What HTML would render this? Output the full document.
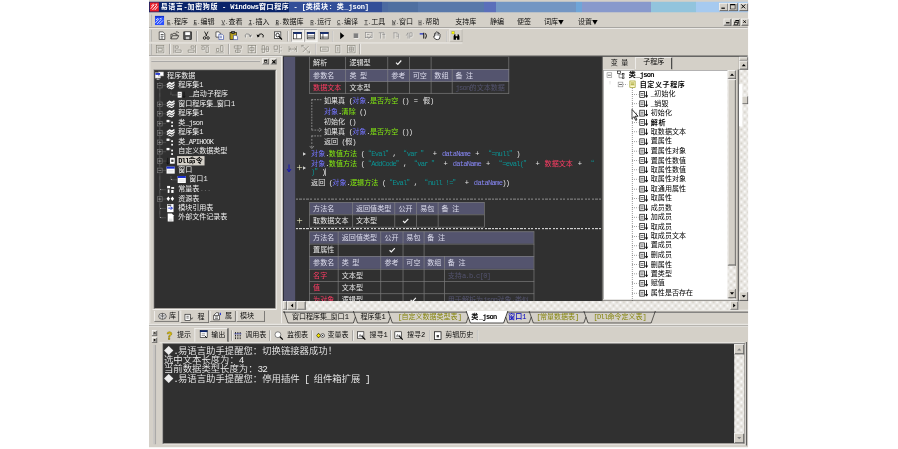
<!DOCTYPE html>
<html lang="zh-CN"><head><meta charset="utf-8"><title>易语言</title><style>
html,body{margin:0;padding:0;background:#fff}
body{width:898px;height:449px;overflow:hidden;position:relative}
#w{position:absolute;left:148.7px;top:0;width:1025px;height:768px;transform:scale(0.584635);transform-origin:0 0;overflow:hidden;background:#fff;font-family:"Liberation Mono","Noto Sans CJK SC",monospace;font-size:12px;line-height:13px;color:#000;font-weight:350;text-spacing-trim:space-all}
#w div,#w svg,#w i{position:absolute;display:block}
#w .t{white-space:pre}
#w span{position:static}
#w .op{display:inline-block;width:12px;text-align:center}
.l{letter-spacing:-1.2px}
.dn{font-size:10px;width:11px !important}
.ma{font-size:10px;color:#222}
.c{font-family:"Noto Sans CJK SC",sans-serif;display:inline-block;width:1em;text-spacing-trim:space-all;line-height:0}
.ttl .l{letter-spacing:-0.2px}
.big{font-size:16px;line-height:16px}
.big .l{letter-spacing:-1.6px}
.btn{background:#d4d0c8;border:1px solid;border-color:#fff #404040 #404040 #fff;box-shadow:inset -1px -1px 0 #808080}
u{text-decoration:underline}
</style></head><body><div id="w">
<div style="left:0px;top:0px;width:1025px;height:765.2px;background:#d4d0c8"></div>
<div style="left:0px;top:3px;width:1025px;height:17.7px;background:linear-gradient(90deg,#0a246a 0px,#0a246a 239px,#324e98 239px,#324e98 399px,#4c6aa0 399px,#4c6aa0 409px,#4f6fa0 409px,#4f6fa0 460px,#5878aa 460px,#5878aa 573px,#5b6fba 573px,#5b6fba 594px,#7396c3 594px,#7396c3 730px,#6fa5d8 730px,#6fa5d8 741px,#8899cc 741px,#8899cc 859px,#92c4dd 859px,#92c4dd 936px,#a6caf0 936px,#a6caf0 1025px)"></div>
<svg class="a" style="left:0.8px;top:4px" width="16" height="16" viewBox="0 0 16 16"><rect width="16" height="16" fill="#e8202a"/><path d="M2 11 L8 4 M5 13 L12 5 M9 13 L14 7 M3 6 L7 3 M10 4 L13 3" stroke="#fff" stroke-width="1.6" fill="none"/></svg>
<div class="t ttl" style="left:20px;top:4px;color:#fff;font-weight:bold;letter-spacing:1px;line-height:16px">易语言<span class="l">-</span>加密狗版<span class="l"> - Windows</span>窗口程序<span class="l"> - [</span>类模块<span class="l">: </span>类<span class="l">_json]</span></div>
<div class="btn" style="left:974.6px;top:5px;width:14px;height:12px">
<i style="left:3px;top:7px;width:6px;height:2px;background:#000"></i>
</div>
<div class="btn" style="left:990.6px;top:5px;width:14px;height:12px">
<i style="left:2px;top:1px;width:7px;height:6px;border:1px solid #000;border-top-width:2px"></i>
</div>
<div class="btn" style="left:1008.6px;top:5px;width:14px;height:12px">
<svg class="a" style="left:2px;top:1px" width="9" height="8" viewBox="0 0 9 8"><path d="M1 0.5 L8 7.5 M8 0.5 L1 7.5" stroke="#000" stroke-width="1.7"/></svg>
</div>
<div class="btn" style="left:982.7px;top:32px;width:11px;height:10px">
<i style="left:3px;top:5px;width:6px;height:2px;background:#000"></i>
</div>
<div class="btn" style="left:998px;top:32px;width:11px;height:10px">
<i style="left:4px;top:1px;width:4px;height:3px;border:1px solid #000;border-top-width:2px"></i><i style="left:2px;top:4px;width:4px;height:3px;border:1px solid #000;border-top-width:2px;background:#d4d0c8"></i>
</div>
<div class="btn" style="left:1013px;top:32px;width:10.5px;height:10px">
<svg class="a" style="left:2px;top:1px" width="5.5" height="6" viewBox="0 0 9 8"><path d="M1 0.5 L8 7.5 M8 0.5 L1 7.5" stroke="#000" stroke-width="2.6"/></svg>
</div>
<div style="left:0px;top:47px;width:1024px;height:1px;background:#808080"></div>
<div style="left:0px;top:48px;width:1024px;height:1px;background:#fff"></div>
<div style="left:2.3px;top:25px;width:1px;height:20px;background:#fff"></div>
<div style="left:3.3px;top:25px;width:1px;height:20px;background:#808080"></div>
<svg class="a" style="left:10px;top:27px" width="16" height="16" viewBox="0 0 16 16"><rect width="16" height="16" fill="#2a50ff"/><path d="M1 12 L7 5 M4 14 L11 6 M8 14 L14 8 M2 7 L6 4 M9 5 L13 3" stroke="#dfe6ff" stroke-width="1.5" fill="none"/><rect y="0" width="16" height="3" fill="#1030d0"/></svg>
<div class="t" style="left:30.8px;top:32.3px"><span class="ma"><u>E</u>.</span>程序</div>
<div class="t" style="left:76.1px;top:32.3px"><span class="ma"><u>E</u>.</span>编辑</div>
<div class="t" style="left:124px;top:32.3px"><span class="ma"><u>V</u>.</span>查看</div>
<div class="t" style="left:170.2px;top:32.3px"><span class="ma"><u>I</u>.</span>插入</div>
<div class="t" style="left:216.4px;top:32.3px"><span class="ma"><u>B</u>.</span>数据库</div>
<div class="t" style="left:275.7px;top:32.3px"><span class="ma"><u>R</u>.</span>运行</div>
<div class="t" style="left:321.6px;top:32.3px"><span class="ma"><u>C</u>.</span>编译</div>
<div class="t" style="left:368.3px;top:32.3px"><span class="ma"><u>T</u>.</span>工具</div>
<div class="t" style="left:415.5px;top:32.3px"><span class="ma"><u>W</u>.</span>窗口</div>
<div class="t" style="left:460.7px;top:32.3px"><span class="ma"><u>H</u>.</span>帮助</div>
<div class="t" style="left:523.9px;top:32.3px;">支持库</div>
<div class="t" style="left:583.3px;top:32.3px;">静编</div>
<div class="t" style="left:629.4px;top:32.3px;">便签</div>
<div class="t" style="left:675.6px;top:32.3px;">词库<span class="c dn">▼</span></div>
<div class="t" style="left:733.9px;top:32.3px;">设置<span class="c dn">▼</span></div>
<div style="left:2.3px;top:51px;width:1px;height:20px;background:#fff"></div>
<div style="left:3.3px;top:51px;width:1px;height:20px;background:#808080"></div>
<div style="left:0px;top:72.5px;width:536px;height:1px;background:#fff"></div>
<svg class="a" style="left:13.7px;top:53.2px" width="16" height="16" viewBox="0 0 16 16"><path d="M3.5 1.5 H10 L13 4.5 V14.5 H3.5 Z" fill="#fff" stroke="#000"/><path d="M6 6 H11 M6 9 H11 M6 12 H10" stroke="#444" stroke-width="1.5"/></svg>
<svg class="a" style="left:36px;top:53.2px" width="16" height="16" viewBox="0 0 16 16"><path d="M1.5 13.5 V5.5 H5 L6 4 H9 V5.5 H12 V8" fill="none" stroke="#000"/><path d="M1.5 13.5 L4 8 H15 L12 13.5 Z" fill="#d4d0c8" stroke="#000"/><path d="M10 2 Q13 0 14 3 L15 2" stroke="#000" fill="none"/></svg>
<svg class="a" style="left:57.9px;top:53.2px" width="16" height="16" viewBox="0 0 16 16"><rect x="1.5" y="1.5" width="13" height="13" fill="#555" stroke="#000"/><rect x="4" y="2" width="8" height="5" fill="#fff"/><rect x="5" y="10" width="6" height="4" fill="#ccc"/></svg>
<div style="left:81.2px;top:53px;width:1px;height:18px;background:#808080"></div>
<div style="left:82.2px;top:53px;width:1px;height:18px;background:#fff"></div>
<svg class="a" style="left:89.8px;top:53.2px" width="16" height="16" viewBox="0 0 16 16"><path d="M5 1 L9 9 M11 1 L7 9" stroke="#000" stroke-width="1.3"/><circle cx="5" cy="12" r="2.2" fill="none" stroke="#000" stroke-width="1.3"/><circle cx="11" cy="12" r="2.2" fill="none" stroke="#000" stroke-width="1.3"/></svg>
<svg class="a" style="left:112.8px;top:53.2px" width="16" height="16" viewBox="0 0 16 16"><path d="M1.5 1.5 H7 L9 3.5 V10.5 H1.5 Z" fill="#fff" stroke="#000"/><path d="M6.5 5.5 H12 L14.5 8 V14.5 H6.5 Z" fill="#fff" stroke="#223a9a"/><path d="M8 9 H12 M8 11.5 H12" stroke="#223a9a"/></svg>
<svg class="a" style="left:136.9px;top:53.2px" width="16" height="16" viewBox="0 0 16 16"><rect x="1.5" y="2.5" width="11" height="12" fill="#b8a020" stroke="#000"/><rect x="4.5" y="1" width="5" height="3" fill="#666" stroke="#000"/><path d="M7.5 7.5 H12 L14.5 10 V15 H7.5 Z" fill="#fff" stroke="#223a9a"/></svg>
<svg class="a" style="left:160.5px;top:53.2px;filter:drop-shadow(1px 1px 0 #fff)" width="16" height="16" viewBox="0 0 16 16"><path d="M13 9 Q11 4 6 5 Q2 6 4 11" fill="none" stroke="#808080" stroke-width="1.5"/><path d="M15 6 L13 11 L9 8 Z" fill="#808080"/></svg>
<svg class="a" style="left:182.7px;top:53.2px" width="16" height="16" viewBox="0 0 16 16"><path d="M3 9 Q5 4 10 5 Q14 6 12 11" fill="none" stroke="#000" stroke-width="1.5"/><path d="M1 6 L3 11 L7 8 Z" fill="#000"/></svg>
<svg class="a" style="left:213.3px;top:53.2px" width="16" height="16" viewBox="0 0 16 16"><rect x="1.5" y="1.5" width="11" height="11" fill="#fff" stroke="#000"/><circle cx="7" cy="7" r="3" fill="none" stroke="#000" stroke-width="1.3"/><path d="M9 9 L14.5 14.5" stroke="#000" stroke-width="2"/></svg>
<div style="left:237.1px;top:53px;width:1px;height:18px;background:#808080"></div>
<div style="left:238.1px;top:53px;width:1px;height:18px;background:#fff"></div>
<div style="left:243px;top:50.2px;width:22px;height:22px;background:#ebe9e4;border:1px solid;border-color:#808080 #fff #fff #808080;box-sizing:border-box"></div>
<svg class="a" style="left:246px;top:53.2px" width="16" height="16" viewBox="0 0 16 16"><rect x="1.5" y="2.5" width="13" height="11" fill="#fff" stroke="#000"/><rect x="1" y="2" width="14" height="3" fill="#0a246a"/><path d="M6.5 5 V13" stroke="#000"/></svg>
<div style="left:265.9px;top:50.2px;width:22px;height:22px;background:#ebe9e4;border:1px solid;border-color:#808080 #fff #fff #808080;box-sizing:border-box"></div>
<svg class="a" style="left:268.9px;top:53.2px" width="16" height="16" viewBox="0 0 16 16"><rect x="1.5" y="2.5" width="13" height="11" fill="#fff" stroke="#000"/><rect x="1" y="2" width="14" height="3" fill="#0a246a"/><path d="M2 8.5 H14 M2 11 H14" stroke="#000"/></svg>
<svg class="a" style="left:292.4px;top:53.2px" width="16" height="16" viewBox="0 0 16 16"><rect x="1.5" y="2.5" width="13" height="11" fill="#fff" stroke="#000"/><rect x="1" y="2" width="14" height="3" fill="#0a246a"/><path d="M5.5 5 V13 M2 10.5 H14" stroke="#000"/></svg>
<div style="left:313px;top:53px;width:1px;height:18px;background:#808080"></div>
<div style="left:314px;top:53px;width:1px;height:18px;background:#fff"></div>
<svg class="a" style="left:322.3px;top:53.2px" width="16" height="16" viewBox="0 0 16 16"><path d="M5 2 L12 8 L5 14 Z" fill="#000"/></svg>
<svg class="a" style="left:345.7px;top:53.2px;filter:drop-shadow(1px 1px 0 #fff)" width="16" height="16" viewBox="0 0 16 16"><rect x="4" y="4" width="8" height="8" fill="#808080"/></svg>
<svg class="a" style="left:368px;top:53.2px;filter:drop-shadow(1px 1px 0 #fff)" width="16" height="16" viewBox="0 0 16 16"><rect x="2.5" y="2.5" width="11" height="9" fill="none" stroke="#808080"/><path d="M5 6 H9 M5 9 L8 13 L12 8" stroke="#808080" fill="none"/></svg>
<svg class="a" style="left:391.1px;top:53.2px;filter:drop-shadow(1px 1px 0 #fff)" width="16" height="16" viewBox="0 0 16 16"><path d="M2 3 H11 V13 M5 3 V13 M8 6 H13" stroke="#808080" fill="none"/></svg>
<svg class="a" style="left:415px;top:53.2px;filter:drop-shadow(1px 1px 0 #fff)" width="16" height="16" viewBox="0 0 16 16"><path d="M3 3 H10 M4 3 V13 M8 5 H12 V13 M8 9 H12" stroke="#808080" fill="none"/></svg>
<svg class="a" style="left:438.4px;top:53.2px;filter:drop-shadow(1px 1px 0 #fff)" width="16" height="16" viewBox="0 0 16 16"><path d="M2 8 L5 3 V13 M8 3 H12 V9 H8 M8 3 V13" stroke="#808080" fill="none"/></svg>
<svg class="a" style="left:461.9px;top:53.2px" width="16" height="16" viewBox="0 0 16 16"><path d="M1 4 H8 L8 6 H1Z" fill="#2030c0"/><path d="M8 3 V13 M11 4 Q14 8 11 13" stroke="#000" stroke-width="1.6" fill="none"/></svg>
<svg class="a" style="left:484.8px;top:53.2px" width="16" height="16" viewBox="0 0 16 16"><path d="M3.5 9 V4.5 Q4.5 2.5 5.5 4.5 V2.5 Q6.8 0.8 8 2.5 V2.2 Q9.7 1 10.3 3.2 V4.2 Q12 3.5 12.7 5.5 V10 Q12.7 15 8 15 Q4.5 15 2 10.5 Q1.5 8 3.5 9 Z" fill="#fff" stroke="#000" stroke-width="1.2"/><path d="M5.5 5 V8 M8 3 V8 M10.3 4 V8" stroke="#000" stroke-width=".8"/></svg>
<div style="left:508.4px;top:53px;width:1px;height:18px;background:#808080"></div>
<div style="left:509.4px;top:53px;width:1px;height:18px;background:#fff"></div>
<div style="left:513.8px;top:50.2px;width:22px;height:22px;border:1px solid;border-color:#f4f2ee #b0aca4 #b0aca4 #f4f2ee;box-sizing:border-box"></div>
<svg class="a" style="left:516.8px;top:53.2px" width="16" height="16" viewBox="0 0 16 16"><rect x="1" y="1" width="4" height="4" fill="#ffff00" stroke="#808000" stroke-width=".6"/><path d="M4 9 V15 H8 V11.5 H10 V15 H14 V9 L12.5 5.5 H10.8 V9 H7.2 V5.5 H5.5 Z" fill="#000"/></svg>
<div style="left:2.3px;top:75px;width:1px;height:19px;background:#fff"></div>
<div style="left:3.3px;top:75px;width:1px;height:19px;background:#808080"></div>
<svg class="a" style="left:10.8px;top:76px;filter:drop-shadow(1px 1px 0 #fff)" width="16" height="16" viewBox="0 0 16 16" fill="none" stroke="#858378" stroke-width="1.2"><rect x="1.5" y="1.5" width="13" height="13"/><rect x="4.5" y="6.5" width="7" height="5"/><path d="M2 4.5 H14"/></svg>
<div style="left:34.7px;top:75px;width:1px;height:18px;background:#808080"></div>
<div style="left:35.7px;top:75px;width:1px;height:18px;background:#fff"></div>
<svg class="a" style="left:41.1px;top:76px;filter:drop-shadow(1px 1px 0 #fff)" width="16" height="16" viewBox="0 0 16 16" fill="none" stroke="#858378" stroke-width="1.2"><path d="M1.5 1 V15 M4 2.5 H9 V6.5 H4Z M4 9.5 H14 V13.5 H4Z"/></svg>
<svg class="a" style="left:65px;top:76px;filter:drop-shadow(1px 1px 0 #fff)" width="16" height="16" viewBox="0 0 16 16" fill="none" stroke="#858378" stroke-width="1.2"><path d="M14.5 1 V15 M7 2.5 H12 V6.5 H7Z M2 9.5 H12 V13.5 H2Z"/></svg>
<svg class="a" style="left:88px;top:76px;filter:drop-shadow(1px 1px 0 #fff)" width="16" height="16" viewBox="0 0 16 16" fill="none" stroke="#858378" stroke-width="1.2"><path d="M1 1.5 H15 M2.5 4 H6.5 V9 H2.5Z M9.5 4 H13.5 V14 H9.5Z"/></svg>
<svg class="a" style="left:112.8px;top:76px;filter:drop-shadow(1px 1px 0 #fff)" width="16" height="16" viewBox="0 0 16 16" fill="none" stroke="#858378" stroke-width="1.2"><path d="M1 14.5 H15 M2.5 7 H6.5 V12 H2.5Z M9.5 2 H13.5 V12 H9.5Z"/></svg>
<div style="left:135.6px;top:75px;width:1px;height:18px;background:#808080"></div>
<div style="left:136.6px;top:75px;width:1px;height:18px;background:#fff"></div>
<svg class="a" style="left:144.1px;top:76px;filter:drop-shadow(1px 1px 0 #fff)" width="16" height="16" viewBox="0 0 16 16" fill="none" stroke="#858378" stroke-width="1.2"><path d="M8 1 V15 M2 2.5 H14 V6.5 H2Z M4 9.5 H12 V13.5 H4Z"/></svg>
<svg class="a" style="left:167.8px;top:76px;filter:drop-shadow(1px 1px 0 #fff)" width="16" height="16" viewBox="0 0 16 16" fill="none" stroke="#858378" stroke-width="1.2"><rect x="1.5" y="1.5" width="13" height="13"/><path d="M8 1 V15 M4.5 5.5 H11.5 V10.5 H4.5Z"/></svg>
<svg class="a" style="left:191.4px;top:76px;filter:drop-shadow(1px 1px 0 #fff)" width="16" height="16" viewBox="0 0 16 16" fill="none" stroke="#858378" stroke-width="1.2"><path d="M1 8 H15 M2.5 2 H6.5 V14 H2.5Z M9.5 4 H13.5 V12 H9.5Z"/></svg>
<svg class="a" style="left:212.3px;top:76px;filter:drop-shadow(1px 1px 0 #fff)" width="16" height="16" viewBox="0 0 16 16" fill="none" stroke="#858378" stroke-width="1.2"><path d="M2 2.5 H8 V8.5 H2Z M11 1 V15 M13 5 H15 M13 11 H15 M2 11.5 H8"/></svg>
<svg class="a" style="left:238px;top:76px;filter:drop-shadow(1px 1px 0 #fff)" width="16" height="16" viewBox="0 0 16 16" fill="none" stroke="#858378" stroke-width="1.2"><path d="M1.5 3 V13 M14.5 3 V13 M2 8 H14 M5 5.5 L2.5 8 L5 10.5 M11 5.5 L13.5 8 L11 10.5"/></svg>
<svg class="a" style="left:260.4px;top:76px;filter:drop-shadow(1px 1px 0 #fff)" width="16" height="16" viewBox="0 0 16 16" fill="none" stroke="#858378" stroke-width="1.2"><path d="M3 3 L13 13 M13 3 L3 13 M1 1.5 H5 M11 14.5 H15 M1.5 1 V5 M14.5 11 V15"/></svg>
<div style="left:283.8px;top:75px;width:1px;height:18px;background:#808080"></div>
<div style="left:284.8px;top:75px;width:1px;height:18px;background:#fff"></div>
<svg class="a" style="left:292.4px;top:76px;filter:drop-shadow(1px 1px 0 #fff)" width="16" height="16" viewBox="0 0 16 16" fill="none" stroke="#858378" stroke-width="1.2"><rect x="1.5" y="4.5" width="13" height="7"/><path d="M4 8 H12"/></svg>
<svg class="a" style="left:315.1px;top:76px;filter:drop-shadow(1px 1px 0 #fff)" width="16" height="16" viewBox="0 0 16 16" fill="none" stroke="#858378" stroke-width="1.2"><rect x="4.5" y="1.5" width="7" height="13"/><path d="M8 4 V12"/></svg>
<svg class="a" style="left:337.5px;top:76px;filter:drop-shadow(1px 1px 0 #fff)" width="16" height="16" viewBox="0 0 16 16" fill="none" stroke="#858378" stroke-width="1.2"><rect x="1.5" y="1.5" width="13" height="13"/><path d="M4 8 H12 M8 4 V12 M4.5 4.5 H11.5 V11.5 H4.5Z"/></svg>
<div style="left:359.7px;top:75px;width:1px;height:18px;background:#808080"></div>
<div style="left:360.7px;top:75px;width:1px;height:18px;background:#fff"></div>
<div style="left:4px;top:104.2px;width:186px;height:1px;background:#fff"></div>
<div style="left:4px;top:105.2px;width:186px;height:1px;background:#808080"></div>
<div class="btn" style="left:194px;top:99.5px;width:8.5px;height:8.5px"><i style="left:1.7px;top:1.5px;width:5px;height:5px;background:#000"></i><i style="left:2.7px;top:3.3px;width:3px;height:2.2px;background:#d4d0c8"></i></div>
<div class="btn" style="left:207.5px;top:99.5px;width:8.5px;height:8.5px"><svg class="a" style="left:1px;top:1px" width="7" height="7" viewBox="0 0 7 7"><path d="M0.8 0.8 L6.2 6.2 M6.2 0.8 L0.8 6.2" stroke="#000" stroke-width="1.8"/></svg></div>
<div style="left:0px;top:94.6px;width:229px;height:1px;background:#808080"></div>
<div style="left:0px;top:95.6px;width:229px;height:1px;background:#fff"></div>
<div style="left:0.8px;top:97px;width:1.2px;height:456px;background:#fff"></div>
<div style="left:225.5px;top:97px;width:1.3px;height:456px;background:#fff"></div>
<div style="left:8.3px;top:118.5px;width:210.2px;height:410.8px;border:1px solid;border-color:#808080 #fff #fff #808080;box-sizing:border-box;background:#d4d0c8"></div>
<div style="left:9.3px;top:119.5px;width:208.2px;height:408.8px;border:1px solid;border-color:#404040 #d4d0c8 #d4d0c8 #404040;box-sizing:border-box;background:#303030"></div>
<div style="left:17.5px;top:137.7px;width:0px;height:234.24px;border-left:1px dotted #a8a8a8"></div>
<svg class="a" style="left:10px;top:121.7px" width="16" height="16" viewBox="0 0 16 16"><rect x="0.5" y="2.5" width="9" height="9" fill="#fff" stroke="#bbb"/><rect x="6" y="1" width="9" height="7" fill="#fff" stroke="#999"/><rect x="1" y="3" width="8" height="3" fill="#1a2fd0"/><path d="M3 14 H8 M5 12 V14" stroke="#ddd"/></svg>
<div class="t" style="left:31px;top:123.7px;color:#f0f0f0;font-weight:400">程序数据</div>
<div style="left:18px;top:145.86px;width:10px;height:0px;border-top:1px dotted #a8a8a8"></div>
<div class="a" style="left:13.5px;top:141.86px;width:9px;height:9px;box-sizing:border-box;border:1px solid #808080;background:#303030"><i style="left:1px;top:3px;width:5px;height:1px;background:#b0b0b0"></i></div>
<svg class="a" style="left:29px;top:137.86px" width="16" height="16" viewBox="0 0 16 16"><path d="M1 6 L6 2 L10 4 L14 1.5 L15 4 L10 7.5 L6 5.5 L2 8.5 Z M1 10 L6 6.5 L10 8.5 L15 5.5 L15 8 L10 11.5 L6 9.5 L2 12.5 Z M3 14 L6 11 L10 13 L14 10 L14 12 L10 15 L6 13.5 Z" fill="#f4f4f4"/></svg>
<div class="t" style="left:50px;top:139.86px;color:#f0f0f0;font-weight:400">程序集<span class="l">1</span></div>
<div style="left:37px;top:162.02px;width:10px;height:0px;border-top:1px dotted #a8a8a8"></div>
<div style="left:37px;top:154.02px;width:0px;height:8px;border-left:1px dotted #a8a8a8"></div>
<svg class="a" style="left:48px;top:154.02px" width="16" height="16" viewBox="0 0 16 16"><rect x="1" y="3" width="7" height="10" fill="#fff"/><path d="M2.5 6 H6.5 M2.5 9 H6.5" stroke="#555"/><path d="M12 3 V12 M10 10 L12 13 L14 10" stroke="#111" stroke-width="1.5" fill="none"/></svg>
<div class="t" style="left:69px;top:156.02px;color:#f0f0f0;font-weight:400"><span class="l">_</span>启动子程序</div>
<div style="left:18px;top:178.18px;width:10px;height:0px;border-top:1px dotted #a8a8a8"></div>
<div class="a" style="left:13.5px;top:174.18px;width:9px;height:9px;box-sizing:border-box;border:1px solid #808080;background:#303030"><i style="left:1px;top:3px;width:5px;height:1px;background:#b0b0b0"></i><i style="left:3px;top:1px;width:1px;height:5px;background:#b0b0b0"></i></div>
<svg class="a" style="left:29px;top:170.18px" width="16" height="16" viewBox="0 0 16 16"><path d="M1 6 L6 2 L10 4 L14 1.5 L15 4 L10 7.5 L6 5.5 L2 8.5 Z M1 10 L6 6.5 L10 8.5 L15 5.5 L15 8 L10 11.5 L6 9.5 L2 12.5 Z M3 14 L6 11 L10 13 L14 10 L14 12 L10 15 L6 13.5 Z" fill="#f4f4f4"/></svg>
<div class="t" style="left:50px;top:172.18px;color:#f0f0f0;font-weight:400">窗口程序集<span class="l">_</span>窗口<span class="l">1</span></div>
<div style="left:18px;top:194.34px;width:10px;height:0px;border-top:1px dotted #a8a8a8"></div>
<div class="a" style="left:13.5px;top:190.34px;width:9px;height:9px;box-sizing:border-box;border:1px solid #808080;background:#303030"><i style="left:1px;top:3px;width:5px;height:1px;background:#b0b0b0"></i><i style="left:3px;top:1px;width:1px;height:5px;background:#b0b0b0"></i></div>
<svg class="a" style="left:29px;top:186.34px" width="16" height="16" viewBox="0 0 16 16"><path d="M1 6 L6 2 L10 4 L14 1.5 L15 4 L10 7.5 L6 5.5 L2 8.5 Z M1 10 L6 6.5 L10 8.5 L15 5.5 L15 8 L10 11.5 L6 9.5 L2 12.5 Z M3 14 L6 11 L10 13 L14 10 L14 12 L10 15 L6 13.5 Z" fill="#f4f4f4"/></svg>
<div class="t" style="left:50px;top:188.34px;color:#f0f0f0;font-weight:400">程序集<span class="l">1</span></div>
<div style="left:18px;top:210.5px;width:10px;height:0px;border-top:1px dotted #a8a8a8"></div>
<div class="a" style="left:13.5px;top:206.5px;width:9px;height:9px;box-sizing:border-box;border:1px solid #808080;background:#303030"><i style="left:1px;top:3px;width:5px;height:1px;background:#b0b0b0"></i><i style="left:3px;top:1px;width:1px;height:5px;background:#b0b0b0"></i></div>
<svg class="a" style="left:29px;top:202.5px" width="16" height="16" viewBox="0 0 16 16"><rect x="1" y="2" width="5" height="4" fill="#fff"/><rect x="9" y="5" width="3" height="3" fill="#fff"/><rect x="9" y="11" width="3" height="3" fill="#fff"/><path d="M6 4 H8" stroke="#ccc"/></svg>
<div class="t" style="left:50px;top:204.5px;color:#f0f0f0;font-weight:400">类<span class="l">_json</span></div>
<div style="left:18px;top:226.66px;width:10px;height:0px;border-top:1px dotted #a8a8a8"></div>
<div class="a" style="left:13.5px;top:222.66px;width:9px;height:9px;box-sizing:border-box;border:1px solid #808080;background:#303030"><i style="left:1px;top:3px;width:5px;height:1px;background:#b0b0b0"></i><i style="left:3px;top:1px;width:1px;height:5px;background:#b0b0b0"></i></div>
<svg class="a" style="left:29px;top:218.66px" width="16" height="16" viewBox="0 0 16 16"><path d="M1 6 L6 2 L10 4 L14 1.5 L15 4 L10 7.5 L6 5.5 L2 8.5 Z M1 10 L6 6.5 L10 8.5 L15 5.5 L15 8 L10 11.5 L6 9.5 L2 12.5 Z M3 14 L6 11 L10 13 L14 10 L14 12 L10 15 L6 13.5 Z" fill="#f4f4f4"/></svg>
<div class="t" style="left:50px;top:220.66px;color:#f0f0f0;font-weight:400">程序集<span class="l">1</span></div>
<div style="left:18px;top:242.82px;width:10px;height:0px;border-top:1px dotted #a8a8a8"></div>
<div class="a" style="left:13.5px;top:238.82px;width:9px;height:9px;box-sizing:border-box;border:1px solid #808080;background:#303030"><i style="left:1px;top:3px;width:5px;height:1px;background:#b0b0b0"></i><i style="left:3px;top:1px;width:1px;height:5px;background:#b0b0b0"></i></div>
<svg class="a" style="left:29px;top:234.82px" width="16" height="16" viewBox="0 0 16 16"><rect x="1" y="2" width="5" height="4" fill="#fff"/><rect x="9" y="5" width="3" height="3" fill="#fff"/><rect x="9" y="11" width="3" height="3" fill="#fff"/><path d="M6 4 H8" stroke="#ccc"/></svg>
<div class="t" style="left:50px;top:236.82px;color:#f0f0f0;font-weight:400">类<span class="l">_APIHOOK</span></div>
<div style="left:18px;top:258.98px;width:10px;height:0px;border-top:1px dotted #a8a8a8"></div>
<div class="a" style="left:13.5px;top:254.98px;width:9px;height:9px;box-sizing:border-box;border:1px solid #808080;background:#303030"><i style="left:1px;top:3px;width:5px;height:1px;background:#b0b0b0"></i><i style="left:3px;top:1px;width:1px;height:5px;background:#b0b0b0"></i></div>
<svg class="a" style="left:29px;top:250.98px" width="16" height="16" viewBox="0 0 16 16"><rect x="1" y="2" width="5" height="4" fill="#fff"/><rect x="9" y="5" width="3" height="3" fill="#fff"/><rect x="9" y="11" width="3" height="3" fill="#fff"/><path d="M6 4 H8" stroke="#ccc"/></svg>
<div class="t" style="left:50px;top:252.98px;color:#f0f0f0;font-weight:400">自定义数据类型</div>
<div style="left:18px;top:275.14px;width:10px;height:0px;border-top:1px dotted #a8a8a8"></div>
<div class="a" style="left:13.5px;top:271.14px;width:9px;height:9px;box-sizing:border-box;border:1px solid #808080;background:#303030"><i style="left:1px;top:3px;width:5px;height:1px;background:#b0b0b0"></i><i style="left:3px;top:1px;width:1px;height:5px;background:#b0b0b0"></i></div>
<svg class="a" style="left:29px;top:267.14px" width="16" height="16" viewBox="0 0 16 16"><path d="M3 3 V13 M1 11 L3 14 L5 11" stroke="#111" stroke-width="1.4" fill="none"/><rect x="7" y="3" width="8" height="10" fill="#fff"/><rect x="9" y="6" width="4" height="4" fill="#444"/></svg>
<div style="left:47.5px;top:267.44px;width:47px;height:15.4px;background:#d4d0c8;"></div>
<div class="t" style="left:50px;top:269.14px;color:#000;font-weight:700"><span class="l">Dll</span>命令</div>
<div style="left:18px;top:291.3px;width:10px;height:0px;border-top:1px dotted #a8a8a8"></div>
<div class="a" style="left:13.5px;top:287.3px;width:9px;height:9px;box-sizing:border-box;border:1px solid #808080;background:#303030"><i style="left:1px;top:3px;width:5px;height:1px;background:#b0b0b0"></i></div>
<svg class="a" style="left:29px;top:283.3px" width="16" height="16" viewBox="0 0 16 16"><rect x="1" y="2" width="14" height="12" fill="#fff"/><rect x="1" y="2" width="14" height="3.5" fill="#1a2fd0"/><path d="M3 8.5 H13 M3 11 H13" stroke="#ccc"/></svg>
<div class="t" style="left:50px;top:285.3px;color:#f0f0f0;font-weight:400">窗口</div>
<div style="left:37px;top:307.46px;width:10px;height:0px;border-top:1px dotted #a8a8a8"></div>
<div style="left:37px;top:299.46px;width:0px;height:8px;border-left:1px dotted #a8a8a8"></div>
<svg class="a" style="left:48px;top:299.46px" width="16" height="16" viewBox="0 0 16 16"><rect x="1" y="2" width="14" height="12" fill="#fff"/><rect x="1" y="2" width="14" height="3.5" fill="#1a2fd0"/><path d="M3 8.5 H13 M3 11 H13" stroke="#ccc"/></svg>
<div class="t" style="left:69px;top:301.46px;color:#f0f0f0;font-weight:400">窗口<span class="l">1</span></div>
<div style="left:18px;top:323.62px;width:10px;height:0px;border-top:1px dotted #a8a8a8"></div>
<svg class="a" style="left:29px;top:315.62px" width="16" height="16" viewBox="0 0 16 16"><rect x="2" y="2" width="5" height="4" fill="#fff"/><rect x="9" y="4" width="5" height="3" fill="#fff"/><rect x="3" y="8" width="3" height="6" fill="#fff"/><rect x="9" y="9" width="4" height="5" fill="#fff"/></svg>
<div class="t" style="left:50px;top:317.62px;color:#f0f0f0;font-weight:400">常量表</div>
<div class="t" style="left:87px;top:317.62px;color:#707070"><span class="l">...</span></div>
<div style="left:18px;top:339.78px;width:10px;height:0px;border-top:1px dotted #a8a8a8"></div>
<div class="a" style="left:13.5px;top:335.78px;width:9px;height:9px;box-sizing:border-box;border:1px solid #808080;background:#303030"><i style="left:1px;top:3px;width:5px;height:1px;background:#b0b0b0"></i><i style="left:3px;top:1px;width:1px;height:5px;background:#b0b0b0"></i></div>
<svg class="a" style="left:29px;top:331.78px" width="16" height="16" viewBox="0 0 16 16"><path d="M1 8 L4 4 L7 8 L4 12 Z M8 8 L11 4 L14 8 L11 12 Z" fill="#fff"/></svg>
<div class="t" style="left:50px;top:333.78px;color:#f0f0f0;font-weight:400">资源表</div>
<div style="left:18px;top:355.94px;width:10px;height:0px;border-top:1px dotted #a8a8a8"></div>
<svg class="a" style="left:29px;top:347.94px" width="16" height="16" viewBox="0 0 16 16"><rect x="2" y="1" width="11" height="14" fill="#fff"/><path d="M4 8 H11 M8 5 L11 8 L8 11" stroke="#1a2fd0" stroke-width="1.6" fill="none"/><rect x="3" y="2" width="6" height="2" fill="#333"/></svg>
<div class="t" style="left:50px;top:349.94px;color:#f0f0f0;font-weight:400">模块引用表</div>
<div style="left:18px;top:372.1px;width:10px;height:0px;border-top:1px dotted #a8a8a8"></div>
<svg class="a" style="left:29px;top:364.1px" width="16" height="16" viewBox="0 0 16 16"><path d="M3 1 H10 L13 4 V15 H3 Z" fill="#fff"/><path d="M5 11 H11 M5 13 H11" stroke="#bbb"/></svg>
<div class="t" style="left:50px;top:366.1px;color:#f0f0f0;font-weight:400">外部文件记录表</div>
<div style="left:6px;top:529px;width:212px;height:1px;background:#fff"></div>
<div style="left:9.4px;top:531.8px;width:41.9px;height:18.3px;border:1px solid;border-color:#d4d0c8 #404040 #404040 #fff;border-top:none;box-sizing:border-box"></div>

<div style="left:53.9px;top:530.8px;width:47.9px;height:21.3px;background:#d4d0c8;border:1px solid;border-color:#d4d0c8 #404040 #404040 #fff;border-top:none;box-sizing:border-box"></div>

<div style="left:103.5px;top:531.8px;width:44.5px;height:18.3px;border:1px solid;border-color:#d4d0c8 #404040 #404040 #fff;border-top:none;box-sizing:border-box"></div>

<div style="left:149.7px;top:531.8px;width:47.9px;height:18.3px;border:1px solid;border-color:#d4d0c8 #404040 #404040 #fff;border-top:none;box-sizing:border-box"></div>

<svg class="a" style="left:14.5px;top:533.3px" width="16" height="16" viewBox="0 0 16 16"><ellipse cx="8" cy="8" rx="6.5" ry="5" fill="#fff" stroke="#000"/><path d="M3 8 Q8 3 13 8 M4 10 Q8 6 12 10 M8 3 V13" stroke="#000" fill="none" stroke-width=".8"/></svg>
<div class="t" style="left:34.2px;top:535.3px;">库</div>
<svg class="a" style="left:59.9px;top:535.3px" width="16" height="16" viewBox="0 0 16 16"><rect x="1.5" y="2.5" width="9" height="11" fill="#fff" stroke="#000"/><path d="M4 6 H8 M4 9 H8" stroke="#000"/><path d="M11 8 L13 11 L15 8" stroke="#000" fill="none"/></svg>
<div class="t" style="left:83px;top:537.3px;">程</div>
<svg class="a" style="left:108.6px;top:533.3px" width="16" height="16" viewBox="0 0 16 16"><path d="M2 6 L6 2 H10 V6 M1.5 6.5 H11.5 V14 H1.5 Z" fill="#fff" stroke="#000"/><path d="M4 9 H9 M4 11.5 H9" stroke="#000"/><rect x="12" y="2" width="2" height="4" fill="#1a2fd0"/></svg>
<div class="t" style="left:130px;top:535.3px;">属</div>
<div class="t" style="left:155.7px;top:535.3px;">模块</div>
<div class="a" style="left:229px;top:96px;width:780px;height:419px;background:#303030;overflow:hidden;font-weight:400;font-size:12.1px">
<div class="a" style="left:0px;top:0px;width:20.5px;height:419px;background:#54546e"></div>
<div class="a" style="left:0px;top:0px;width:1.2px;height:419px;background:#000"></div>
<div class="a" style="left:0px;top:0px;width:780px;height:1px;background:#404040"></div>
<div class="a" style="left:45.8px;top:0.5px;width:340.9px;height:21.7px;background:#303030"></div>
<div class="a" style="left:45.3px;top:0.5px;width:1px;height:21.7px;background:#8a8a8a"></div>
<div class="a" style="left:107.4px;top:0.5px;width:1px;height:21.7px;background:#8a8a8a"></div>
<div class="a" style="left:179px;top:0.5px;width:1px;height:21.7px;background:#8a8a8a"></div>
<div class="a" style="left:215.8px;top:0.5px;width:1px;height:21.7px;background:#8a8a8a"></div>
<div class="a" style="left:252.7px;top:0.5px;width:1px;height:21.7px;background:#8a8a8a"></div>
<div class="a" style="left:386.2px;top:0.5px;width:1px;height:21.7px;background:#8a8a8a"></div>
<div class="t" style="left:51.7px;top:5.9px;color:#e6e6e6">解析</div>
<div class="t" style="left:113.8px;top:5.9px;color:#e6e6e6">逻辑型</div>
<svg class="a" style="left:191.9px;top:6.35px" width="12" height="10" viewBox="0 0 12 10"><path d="M1.5 5 L4.5 8 L10.5 1.5" stroke="#f4f4f4" stroke-width="2" fill="none"/></svg>
<div class="a" style="left:45.8px;top:22.2px;width:340.9px;height:21.6px;background:#54546e"></div>
<div class="a" style="left:45.3px;top:22.2px;width:1px;height:21.6px;background:#8a8a8a"></div>
<div class="a" style="left:107.4px;top:22.2px;width:1px;height:21.6px;background:#8a8a8a"></div>
<div class="a" style="left:179px;top:22.2px;width:1px;height:21.6px;background:#8a8a8a"></div>
<div class="a" style="left:215.8px;top:22.2px;width:1px;height:21.6px;background:#8a8a8a"></div>
<div class="a" style="left:252.7px;top:22.2px;width:1px;height:21.6px;background:#8a8a8a"></div>
<div class="a" style="left:288.7px;top:22.2px;width:1px;height:21.6px;background:#8a8a8a"></div>
<div class="a" style="left:386.2px;top:22.2px;width:1px;height:21.6px;background:#8a8a8a"></div>
<div class="t" style="left:51.7px;top:27.6px;color:#dcdcec">参数名</div>
<div class="t" style="left:113.8px;top:27.6px;color:#dcdcec">类<span class="l"> </span>型</div>
<div class="t" style="left:185.4px;top:27.6px;color:#dcdcec">参考</div>
<div class="t" style="left:222.2px;top:27.6px;color:#dcdcec">可空</div>
<div class="t" style="left:259.1px;top:27.6px;color:#dcdcec">数组</div>
<div class="t" style="left:295.1px;top:27.6px;color:#dcdcec">备<span class="l"> </span>注</div>
<div class="a" style="left:45.8px;top:43.8px;width:340.9px;height:20px;background:#303030"></div>
<div class="a" style="left:45.3px;top:43.8px;width:1px;height:20px;background:#8a8a8a"></div>
<div class="a" style="left:107.4px;top:43.8px;width:1px;height:20px;background:#8a8a8a"></div>
<div class="a" style="left:179px;top:43.8px;width:1px;height:20px;background:#8a8a8a"></div>
<div class="a" style="left:215.8px;top:43.8px;width:1px;height:20px;background:#8a8a8a"></div>
<div class="a" style="left:252.7px;top:43.8px;width:1px;height:20px;background:#8a8a8a"></div>
<div class="a" style="left:288.7px;top:43.8px;width:1px;height:20px;background:#8a8a8a"></div>
<div class="a" style="left:386.2px;top:43.8px;width:1px;height:20px;background:#8a8a8a"></div>
<div class="t" style="left:51.7px;top:49.2px;color:#ff3c64">数据文本</div>
<div class="t" style="left:113.8px;top:49.2px;color:#e6e6e6">文本型</div>
<div class="t" style="left:295.1px;top:49.2px;color:#53536e"><span class="l">json</span>的文本数据</div>
<div class="a" style="left:45.3px;top:0px;width:341.9px;height:1px;background:#8a8a8a"></div>
<div class="a" style="left:45.3px;top:21.7px;width:341.9px;height:1px;background:#8a8a8a"></div>
<div class="a" style="left:45.3px;top:43.3px;width:341.9px;height:1px;background:#8a8a8a"></div>
<div class="a" style="left:45.3px;top:63.3px;width:341.9px;height:1px;background:#8a8a8a"></div>
<div class="t" style="left:70.2px;top:71px"><span style="color:#e6e6e6">如果真<span class="l"> (</span></span><span style="color:#7474ff">对象</span><span style="color:#e6e6e6"><span class="l">.</span></span><span style="color:#84ec10">是否为空</span><span style="color:#e6e6e6"><span class="l"> () </span><span class="op">=</span><span class="l"> </span>假<span class="l">)</span></span></div>
<div class="t" style="left:70.2px;top:89.5px"><span style="color:#7474ff">对象</span><span style="color:#e6e6e6"><span class="l">.</span></span><span style="color:#84ec10">清除</span><span style="color:#e6e6e6"><span class="l"> ()</span></span></div>
<div class="t" style="left:70.2px;top:106.7px"><span style="color:#e6e6e6">初始化<span class="l"> ()</span></span></div>
<div class="t" style="left:70.2px;top:123.9px"><span style="color:#e6e6e6">如果真<span class="l"> (</span></span><span style="color:#7474ff">对象</span><span style="color:#e6e6e6"><span class="l">.</span></span><span style="color:#84ec10">是否为空</span><span style="color:#e6e6e6"><span class="l"> ())</span></span></div>
<div class="t" style="left:70.2px;top:142.4px"><span style="color:#e6e6e6">返回<span class="l"> (</span>假<span class="l">)</span></span></div>
<div class="t" style="left:48.3px;top:161.4px"><span style="color:#7474ff">对象</span><span style="color:#e6e6e6"><span class="l">.</span></span><span style="color:#84ec10">数值方法</span><span style="color:#e6e6e6"><span class="l"> (</span></span><span style="color:#0a9494"><span class="c">“</span><span class="l">Eval</span><span class="c">”</span></span><span style="color:#e6e6e6"><span class="l">, </span></span><span style="color:#0a9494"><span class="c">“</span><span class="l">var </span><span class="c">”</span></span><span style="color:#e6e6e6"><span class="l"> </span><span class="op">+</span><span class="l"> </span></span><span style="color:#8686f2"><span class="l">dataName</span></span><span style="color:#e6e6e6"><span class="l"> </span><span class="op">+</span><span class="l"> </span></span><span style="color:#0a9494"><span class="c">“</span><span class="l">=null</span><span class="c">”</span></span><span style="color:#e6e6e6"><span class="l">)</span></span></div>
<div class="t" style="left:48.3px;top:178.7px"><span style="color:#7474ff">对象</span><span style="color:#e6e6e6"><span class="l">.</span></span><span style="color:#84ec10">数值方法</span><span style="color:#e6e6e6"><span class="l"> (</span></span><span style="color:#0a9494"><span class="c">“</span><span class="l">AddCode</span><span class="c">”</span></span><span style="color:#e6e6e6"><span class="l">, </span></span><span style="color:#0a9494"><span class="c">“</span><span class="l">var </span><span class="c">”</span></span><span style="color:#e6e6e6"><span class="l"> </span><span class="op">+</span><span class="l"> </span></span><span style="color:#8686f2"><span class="l">dataName</span></span><span style="color:#e6e6e6"><span class="l"> </span><span class="op">+</span><span class="l"> </span></span><span style="color:#0a9494"><span class="c">“</span><span class="l">=eval(</span><span class="c">”</span></span><span style="color:#e6e6e6"><span class="l"> </span><span class="op">+</span><span class="l"> </span></span><span style="color:#ff3c64">数据文本</span><span style="color:#e6e6e6"><span class="l"> </span><span class="op">+</span><span class="l"> </span></span><span style="color:#0a9494"><span class="c">“</span></span></div>
<div class="t" style="left:48.3px;top:192.9px"><span style="color:#0a9494"><span class="l">)</span><span class="c">”</span></span><span style="color:#e6e6e6"><span class="l">)</span></span></div>
<div class="a" style="left:72.2px;top:192px;width:1px;height:13px;background:#fff"></div>
<div class="t" style="left:48.3px;top:210.7px"><span style="color:#e6e6e6">返回<span class="l"> (</span></span><span style="color:#7474ff">对象</span><span style="color:#e6e6e6"><span class="l">.</span></span><span style="color:#84ec10">逻辑方法</span><span style="color:#e6e6e6"><span class="l"> (</span></span><span style="color:#0a9494"><span class="c">“</span><span class="l">Eval</span><span class="c">”</span></span><span style="color:#e6e6e6"><span class="l">, </span></span><span style="color:#0a9494"><span class="c">“</span><span class="l">null !=</span><span class="c">”</span></span><span style="color:#e6e6e6"><span class="l"> </span><span class="op">+</span><span class="l"> </span></span><span style="color:#8686f2"><span class="l">dataName</span></span><span style="color:#e6e6e6"><span class="l">))</span></span></div>
<div class="a" style="left:48.8px;top:74.4px;width:17px;height:0px;border-top:1px dashed #c8c8c8"></div>
<div class="a" style="left:48.8px;top:74.4px;width:0px;height:52px;border-left:1px dashed #c8c8c8"></div>
<div class="a" style="left:48.8px;top:126.4px;width:13px;height:0px;border-top:1px dashed #c8c8c8"></div>
<svg class="a" style="left:60.5px;top:122.4px" width="6" height="8" viewBox="0 0 6 8"><path d="M0.5 0.5 L5 4 L0.5 7.5" stroke="#c8c8c8" fill="none"/></svg>
<div class="a" style="left:48.8px;top:135.6px;width:17px;height:0px;border-top:1px dashed #c8c8c8"></div>
<div class="a" style="left:48.8px;top:135.6px;width:0px;height:20px;border-left:1px dashed #c8c8c8"></div>
<svg class="a" style="left:44.8px;top:153px" width="9" height="6" viewBox="0 0 9 6"><path d="M0.5 0.5 L4.5 5 L8.5 0.5" stroke="#c8c8c8" fill="none"/></svg>
<svg class="a" style="left:5.6px;top:185.2px" width="9" height="14" viewBox="0 0 9 14"><path d="M4.5 0 V12 M1 8 L4.5 13 L8 8" stroke="#1010b8" stroke-width="1.6" fill="none"/></svg>
<div class="a" style="left:23.9px;top:190.2px;width:9px;height:1.1px;background:#f2f2c8"></div>
<div class="a" style="left:27.9px;top:186.2px;width:1.1px;height:9px;background:#f2f2c8"></div>
<svg class="a" style="left:34px;top:163.6px" width="6" height="7" viewBox="0 0 6 7"><path d="M0.5 0.5 L5.5 3.5 L0.5 6.5 Z" fill="#d8d8d8"/></svg>
<svg class="a" style="left:34px;top:188.4px" width="6" height="7" viewBox="0 0 6 7"><path d="M0.5 0.5 L5.5 3.5 L0.5 6.5 Z" fill="#d8d8d8"/></svg>
<div class="a" style="left:22px;top:244.2px;width:758px;height:1.3px;background:repeating-linear-gradient(90deg,#d0d0d0 0 3.8px,transparent 3.8px 6.1px)"></div>
<div class="a" style="left:22px;top:294.4px;width:758px;height:1.3px;background:repeating-linear-gradient(90deg,#d0d0d0 0 3.8px,transparent 3.8px 6.1px)"></div>
<div class="a" style="left:45.8px;top:250.2px;width:298.3px;height:21px;background:#54546e"></div>
<div class="a" style="left:45.3px;top:250.2px;width:1px;height:21px;background:#8a8a8a"></div>
<div class="a" style="left:118.6px;top:250.2px;width:1px;height:21px;background:#8a8a8a"></div>
<div class="a" style="left:191.2px;top:250.2px;width:1px;height:21px;background:#8a8a8a"></div>
<div class="a" style="left:228.4px;top:250.2px;width:1px;height:21px;background:#8a8a8a"></div>
<div class="a" style="left:265.1px;top:250.2px;width:1px;height:21px;background:#8a8a8a"></div>
<div class="a" style="left:343.6px;top:250.2px;width:1px;height:21px;background:#8a8a8a"></div>
<div class="t" style="left:51.7px;top:255.6px;color:#dcdcec">方法名</div>
<div class="t" style="left:125px;top:255.6px;color:#dcdcec">返回值类型</div>
<div class="t" style="left:197.6px;top:255.6px;color:#dcdcec">公开</div>
<div class="t" style="left:234.8px;top:255.6px;color:#dcdcec">易包</div>
<div class="t" style="left:271.5px;top:255.6px;color:#dcdcec">备<span class="l"> </span>注</div>
<div class="a" style="left:45.8px;top:271.2px;width:298.3px;height:20.8px;background:#303030"></div>
<div class="a" style="left:45.3px;top:271.2px;width:1px;height:20.8px;background:#8a8a8a"></div>
<div class="a" style="left:118.6px;top:271.2px;width:1px;height:20.8px;background:#8a8a8a"></div>
<div class="a" style="left:191.2px;top:271.2px;width:1px;height:20.8px;background:#8a8a8a"></div>
<div class="a" style="left:228.4px;top:271.2px;width:1px;height:20.8px;background:#8a8a8a"></div>
<div class="a" style="left:265.1px;top:271.2px;width:1px;height:20.8px;background:#8a8a8a"></div>
<div class="a" style="left:343.6px;top:271.2px;width:1px;height:20.8px;background:#8a8a8a"></div>
<div class="t" style="left:51.7px;top:276.6px;color:#e6e6e6">取数据文本</div>
<div class="t" style="left:125px;top:276.6px;color:#e6e6e6">文本型</div>
<svg class="a" style="left:204.3px;top:276.6px" width="12" height="10" viewBox="0 0 12 10"><path d="M1.5 5 L4.5 8 L10.5 1.5" stroke="#f4f4f4" stroke-width="2" fill="none"/></svg>
<div class="a" style="left:45.3px;top:249.7px;width:299.3px;height:1px;background:#8a8a8a"></div>
<div class="a" style="left:45.3px;top:270.7px;width:299.3px;height:1px;background:#8a8a8a"></div>
<div class="a" style="left:45.3px;top:291.5px;width:299.3px;height:1px;background:#8a8a8a"></div>
<div class="a" style="left:24.3px;top:281.3px;width:9px;height:1.1px;background:#f2f2c8"></div>
<div class="a" style="left:28.3px;top:277.3px;width:1.1px;height:9px;background:#f2f2c8"></div>
<div class="a" style="left:45.8px;top:300px;width:383.6px;height:21px;background:#54546e"></div>
<div class="a" style="left:45.3px;top:300px;width:1px;height:21px;background:#8a8a8a"></div>
<div class="a" style="left:94.3px;top:300px;width:1px;height:21px;background:#8a8a8a"></div>
<div class="a" style="left:167.3px;top:300px;width:1px;height:21px;background:#8a8a8a"></div>
<div class="a" style="left:204.8px;top:300px;width:1px;height:21px;background:#8a8a8a"></div>
<div class="a" style="left:240.6px;top:300px;width:1px;height:21px;background:#8a8a8a"></div>
<div class="a" style="left:428.9px;top:300px;width:1px;height:21px;background:#8a8a8a"></div>
<div class="t" style="left:51.7px;top:305.4px;color:#dcdcec">方法名</div>
<div class="t" style="left:100.7px;top:305.4px;color:#dcdcec">返回值类型</div>
<div class="t" style="left:173.7px;top:305.4px;color:#dcdcec">公开</div>
<div class="t" style="left:211.2px;top:305.4px;color:#dcdcec">易包</div>
<div class="t" style="left:247px;top:305.4px;color:#dcdcec">备<span class="l"> </span>注</div>
<div class="a" style="left:45.8px;top:321px;width:383.6px;height:21.3px;background:#303030"></div>
<div class="a" style="left:45.3px;top:321px;width:1px;height:21.3px;background:#8a8a8a"></div>
<div class="a" style="left:94.3px;top:321px;width:1px;height:21.3px;background:#8a8a8a"></div>
<div class="a" style="left:167.3px;top:321px;width:1px;height:21.3px;background:#8a8a8a"></div>
<div class="a" style="left:204.8px;top:321px;width:1px;height:21.3px;background:#8a8a8a"></div>
<div class="a" style="left:240.6px;top:321px;width:1px;height:21.3px;background:#8a8a8a"></div>
<div class="a" style="left:428.9px;top:321px;width:1px;height:21.3px;background:#8a8a8a"></div>
<div class="t" style="left:51.7px;top:326.4px;color:#e6e6e6">置属性</div>
<svg class="a" style="left:180.55px;top:326.65px" width="12" height="10" viewBox="0 0 12 10"><path d="M1.5 5 L4.5 8 L10.5 1.5" stroke="#f4f4f4" stroke-width="2" fill="none"/></svg>
<div class="a" style="left:45.8px;top:342.3px;width:383.6px;height:22px;background:#54546e"></div>
<div class="a" style="left:45.3px;top:342.3px;width:1px;height:22px;background:#8a8a8a"></div>
<div class="a" style="left:94.3px;top:342.3px;width:1px;height:22px;background:#8a8a8a"></div>
<div class="a" style="left:167.3px;top:342.3px;width:1px;height:22px;background:#8a8a8a"></div>
<div class="a" style="left:204.8px;top:342.3px;width:1px;height:22px;background:#8a8a8a"></div>
<div class="a" style="left:240.6px;top:342.3px;width:1px;height:22px;background:#8a8a8a"></div>
<div class="a" style="left:275.7px;top:342.3px;width:1px;height:22px;background:#8a8a8a"></div>
<div class="a" style="left:428.9px;top:342.3px;width:1px;height:22px;background:#8a8a8a"></div>
<div class="t" style="left:51.7px;top:347.7px;color:#dcdcec">参数名</div>
<div class="t" style="left:100.7px;top:347.7px;color:#dcdcec">类<span class="l"> </span>型</div>
<div class="t" style="left:173.7px;top:347.7px;color:#dcdcec">参考</div>
<div class="t" style="left:211.2px;top:347.7px;color:#dcdcec">可空</div>
<div class="t" style="left:247px;top:347.7px;color:#dcdcec">数组</div>
<div class="t" style="left:282.1px;top:347.7px;color:#dcdcec">备<span class="l"> </span>注</div>
<div class="a" style="left:45.8px;top:364.3px;width:383.6px;height:21.3px;background:#303030"></div>
<div class="a" style="left:45.3px;top:364.3px;width:1px;height:21.3px;background:#8a8a8a"></div>
<div class="a" style="left:94.3px;top:364.3px;width:1px;height:21.3px;background:#8a8a8a"></div>
<div class="a" style="left:167.3px;top:364.3px;width:1px;height:21.3px;background:#8a8a8a"></div>
<div class="a" style="left:204.8px;top:364.3px;width:1px;height:21.3px;background:#8a8a8a"></div>
<div class="a" style="left:240.6px;top:364.3px;width:1px;height:21.3px;background:#8a8a8a"></div>
<div class="a" style="left:275.7px;top:364.3px;width:1px;height:21.3px;background:#8a8a8a"></div>
<div class="a" style="left:428.9px;top:364.3px;width:1px;height:21.3px;background:#8a8a8a"></div>
<div class="t" style="left:51.7px;top:369.7px;color:#ff3c64">名字</div>
<div class="t" style="left:100.7px;top:369.7px;color:#e6e6e6">文本型</div>
<div class="t" style="left:282.1px;top:369.7px;color:#53536e">支持<span class="l">a.b.c[0]</span></div>
<div class="a" style="left:45.8px;top:385.6px;width:383.6px;height:20.4px;background:#303030"></div>
<div class="a" style="left:45.3px;top:385.6px;width:1px;height:20.4px;background:#8a8a8a"></div>
<div class="a" style="left:94.3px;top:385.6px;width:1px;height:20.4px;background:#8a8a8a"></div>
<div class="a" style="left:167.3px;top:385.6px;width:1px;height:20.4px;background:#8a8a8a"></div>
<div class="a" style="left:204.8px;top:385.6px;width:1px;height:20.4px;background:#8a8a8a"></div>
<div class="a" style="left:240.6px;top:385.6px;width:1px;height:20.4px;background:#8a8a8a"></div>
<div class="a" style="left:275.7px;top:385.6px;width:1px;height:20.4px;background:#8a8a8a"></div>
<div class="a" style="left:428.9px;top:385.6px;width:1px;height:20.4px;background:#8a8a8a"></div>
<div class="t" style="left:51.7px;top:391px;color:#ff3c64">值</div>
<div class="t" style="left:100.7px;top:391px;color:#e6e6e6">文本型</div>
<div class="a" style="left:45.8px;top:406px;width:383.6px;height:21px;background:#303030"></div>
<div class="a" style="left:45.3px;top:406px;width:1px;height:21px;background:#8a8a8a"></div>
<div class="a" style="left:94.3px;top:406px;width:1px;height:21px;background:#8a8a8a"></div>
<div class="a" style="left:167.3px;top:406px;width:1px;height:21px;background:#8a8a8a"></div>
<div class="a" style="left:204.8px;top:406px;width:1px;height:21px;background:#8a8a8a"></div>
<div class="a" style="left:240.6px;top:406px;width:1px;height:21px;background:#8a8a8a"></div>
<div class="a" style="left:275.7px;top:406px;width:1px;height:21px;background:#8a8a8a"></div>
<div class="a" style="left:428.9px;top:406px;width:1px;height:21px;background:#8a8a8a"></div>
<div class="t" style="left:51.7px;top:411.4px;color:#ff3c64">为对象</div>
<div class="t" style="left:100.7px;top:411.4px;color:#e6e6e6">逻辑型</div>
<svg class="a" style="left:217.2px;top:411.5px" width="12" height="10" viewBox="0 0 12 10"><path d="M1.5 5 L4.5 8 L10.5 1.5" stroke="#f4f4f4" stroke-width="2" fill="none"/></svg>
<div class="t" style="left:282.1px;top:411.4px;color:#53536e">用于解析为<span class="l">json</span>对象<span class="l">,</span>类似<span class="l">...</span></div>
<div class="a" style="left:45.3px;top:299.5px;width:384.6px;height:1px;background:#8a8a8a"></div>
<div class="a" style="left:45.3px;top:320.5px;width:384.6px;height:1px;background:#8a8a8a"></div>
<div class="a" style="left:45.3px;top:341.8px;width:384.6px;height:1px;background:#8a8a8a"></div>
<div class="a" style="left:45.3px;top:363.8px;width:384.6px;height:1px;background:#8a8a8a"></div>
<div class="a" style="left:45.3px;top:385.1px;width:384.6px;height:1px;background:#8a8a8a"></div>
<div class="a" style="left:45.3px;top:405.5px;width:384.6px;height:1px;background:#8a8a8a"></div>
<div class="a" style="left:45.3px;top:426.5px;width:384.6px;height:1px;background:#8a8a8a"></div>
</div>
<div style="left:229px;top:515px;width:780px;height:15px;background:repeating-conic-gradient(#fff 0 25%,#d4d0c8 0 50%) 0 0/2px 2px"></div>
<div class="btn" style="left:229px;top:515px;width:5px;height:13px">
</div>
<div class="btn" style="left:237px;top:515px;width:13px;height:13px">
<svg class="a" style="left:0;top:0" width="13" height="13"><path d="M8.5 3 L8.5 10 L4.5 6.5 Z" fill="#000"/></svg>
</div>
<div class="btn" style="left:252.5px;top:515px;width:13px;height:13px">
</div>
<div class="btn" style="left:993.7px;top:515px;width:12.5px;height:13px">
<svg class="a" style="left:0;top:0" width="12.5" height="13"><path d="M4.25 3 L4.25 10 L8.25 6.5 Z" fill="#000"/></svg>
</div>
<div style="left:1010.3px;top:96px;width:14.7px;height:419px;background:repeating-conic-gradient(#fff 0 25%,#d4d0c8 0 50%) 0 0/2px 2px"></div>
<div class="btn" style="left:1010.3px;top:96.5px;width:12.7px;height:5px">
</div>
<div class="btn" style="left:1010.3px;top:103.5px;width:12.7px;height:13px">
<svg class="a" style="left:0;top:0" width="12.7" height="13"><path d="M2.85 8.5 L9.85 8.5 L6.35 4.5 Z" fill="#000"/></svg>
</div>
<div class="btn" style="left:1010.3px;top:164px;width:12.7px;height:12px">
</div>
<div class="btn" style="left:1010.3px;top:499px;width:12.7px;height:14px">
<svg class="a" style="left:0;top:0" width="12.7" height="14"><path d="M2.85 5 L9.85 5 L6.35 9 Z" fill="#000"/></svg>
</div>
<div style="left:1008.5px;top:143.5px;width:6px;height:72px;background:#fff"></div>
<div style="left:1009px;top:515px;width:16px;height:15px;background:#d4d0c8"></div>
<div style="left:774.4px;top:96px;width:3px;height:419px;background:#404040"></div>
<div style="left:776.4px;top:96px;width:232.6px;height:419px;background:#d4d0c8"></div>
<div style="left:776.4px;top:96px;width:232.6px;height:1px;background:#808080"></div>
<div style="left:1007.2px;top:119px;width:2px;height:396px;background:#606060"></div>
<div class="t" style="left:789.9px;top:101.8px;">变<span class="l"> </span>量</div>
<div style="left:831.8px;top:98px;width:63.3px;height:21px;border:1px solid;border-color:#fff #404040 #d4d0c8 #fff;box-sizing:border-box;border-right-width:2px"></div>
<div class="t" style="left:845.5px;top:100.5px;">子程序</div>
<div style="left:777.4px;top:118.5px;width:53px;height:1px;background:#fff"></div>
<div style="left:777.4px;top:119.7px;width:212.6px;height:392px;background:#fff;border-top:1px solid #808080;border-left:1px solid #808080;box-sizing:border-box"></div>
<div style="left:989.8px;top:119.7px;width:14.5px;height:392px;background:repeating-conic-gradient(#fff 0 25%,#d4d0c8 0 50%) 0 0/2px 2px"></div>
<div class="btn" style="left:989.8px;top:119.7px;width:12.5px;height:13.5px">
<svg class="a" style="left:0;top:0" width="12.5" height="13.5"><path d="M2.75 8.75 L9.75 8.75 L6.25 4.75 Z" fill="#000"/></svg>
</div>
<div class="btn" style="left:989.8px;top:135.5px;width:12.5px;height:316px">
</div>
<div class="btn" style="left:989.8px;top:494px;width:12.5px;height:14px">
<svg class="a" style="left:0;top:0" width="12.5" height="14"><path d="M2.75 5 L9.75 5 L6.25 9 Z" fill="#000"/></svg>
</div>
<div style="left:777.4px;top:511.5px;width:227.6px;height:1.2px;background:#fff"></div>
<div style="left:776.4px;top:512.7px;width:247.6px;height:1.8px;background:#606060"></div>
<div style="left:825.8px;top:150.3px;width:1px;height:366.18px;background:repeating-linear-gradient(180deg,#505050 0 1.7px,transparent 1.7px 3.4px)"></div>
<div style="left:787.7px;top:136.3px;width:0px;height:8px;border-left:1px dotted #a0a0a0"></div>
<div class="a" style="left:783.2px;top:123.8px;width:9px;height:9px;box-sizing:border-box;border:1px solid #808080;background:#fff"><i style="left:1px;top:3px;width:5px;height:1px;background:#000"></i></div>
<svg class="a" style="left:800.4px;top:120.3px" width="16" height="16" viewBox="0 0 16 16"><rect x="1.5" y="1.5" width="5" height="4" fill="#fff" stroke="#000"/><rect x="9.5" y="5.5" width="3" height="3" fill="none" stroke="#000"/><rect x="9.5" y="11.5" width="3" height="3" fill="none" stroke="#000"/><path d="M4 6 V13 H9 M4 7 H9" stroke="#555" fill="none"/></svg>
<div class="t" style="left:820.4px;top:123px;color:#000;font-weight:bold;letter-spacing:1px;">类<span class="l">_json</span></div>
<div style="left:807.4px;top:144.49px;width:11px;height:1px;background:repeating-linear-gradient(90deg,#606060 0 1.7px,transparent 1.7px 3.4px)"></div>
<div class="a" style="left:802.2px;top:139.99px;width:9px;height:9px;box-sizing:border-box;border:1px solid #808080;background:#fff"><i style="left:1px;top:3px;width:5px;height:1px;background:#000"></i></div>
<svg class="a" style="left:819.4px;top:136.49px" width="16" height="16" viewBox="0 0 16 16"><rect x="3.5" y="2.5" width="9" height="11" fill="#fffbd0" stroke="#8a8a00"/><path d="M5 6 H11 M5 9 H11" stroke="#8a8a00" stroke-width="1.4"/></svg>
<div class="t" style="left:839.4px;top:139.19px;color:#000;font-weight:bold;letter-spacing:1px;">自定义子程序</div>
<div style="left:826.4px;top:160.68px;width:11px;height:1px;background:repeating-linear-gradient(90deg,#606060 0 1.7px,transparent 1.7px 3.4px)"></div>
<svg class="a" style="left:838.4px;top:152.68px" width="16" height="16" viewBox="0 0 16 16"><rect x="1.5" y="3.5" width="8" height="10" fill="#fff" stroke="#000" stroke-width="1.2"/><path d="M3 7 H8 M3 10 H8" stroke="#000"/><path d="M13 3 V13 M11 10 L13 13.5 L15 10" stroke="#000" stroke-width="1.5" fill="none"/></svg>
<div class="t" style="left:858.4px;top:155.38px;color:#000;font-weight:400;"><span class="l">_</span>初始化</div>
<div style="left:826.4px;top:176.87px;width:11px;height:1px;background:repeating-linear-gradient(90deg,#606060 0 1.7px,transparent 1.7px 3.4px)"></div>
<svg class="a" style="left:838.4px;top:168.87px" width="16" height="16" viewBox="0 0 16 16"><rect x="1.5" y="3.5" width="8" height="10" fill="#fff" stroke="#000" stroke-width="1.2"/><path d="M3 7 H8 M3 10 H8" stroke="#000"/><path d="M13 3 V13 M11 10 L13 13.5 L15 10" stroke="#000" stroke-width="1.5" fill="none"/></svg>
<div class="t" style="left:858.4px;top:171.57px;color:#000;font-weight:400;"><span class="l">_</span>销毁</div>
<div style="left:826.4px;top:193.06px;width:11px;height:1px;background:repeating-linear-gradient(90deg,#606060 0 1.7px,transparent 1.7px 3.4px)"></div>
<svg class="a" style="left:838.4px;top:185.06px" width="16" height="16" viewBox="0 0 16 16"><rect x="1.5" y="3.5" width="8" height="10" fill="#fff" stroke="#000" stroke-width="1.2"/><path d="M3 7 H8 M3 10 H8" stroke="#000"/><path d="M13 3 V13 M11 10 L13 13.5 L15 10" stroke="#000" stroke-width="1.5" fill="none"/></svg>
<div class="t" style="left:858.4px;top:187.76px;color:#000;font-weight:400;">初始化</div>
<div style="left:826.4px;top:209.25px;width:11px;height:1px;background:repeating-linear-gradient(90deg,#606060 0 1.7px,transparent 1.7px 3.4px)"></div>
<svg class="a" style="left:838.4px;top:201.25px" width="16" height="16" viewBox="0 0 16 16"><rect x="1.5" y="3.5" width="8" height="10" fill="#fff" stroke="#000" stroke-width="1.2"/><path d="M3 7 H8 M3 10 H8" stroke="#000"/><path d="M13 3 V13 M11 10 L13 13.5 L15 10" stroke="#000" stroke-width="1.5" fill="none"/></svg>
<div class="t" style="left:858.4px;top:203.95px;color:#000;font-weight:bold;letter-spacing:1px;">解析</div>
<div style="left:826.4px;top:225.44px;width:11px;height:1px;background:repeating-linear-gradient(90deg,#606060 0 1.7px,transparent 1.7px 3.4px)"></div>
<svg class="a" style="left:838.4px;top:217.44px" width="16" height="16" viewBox="0 0 16 16"><rect x="1.5" y="3.5" width="8" height="10" fill="#fff" stroke="#000" stroke-width="1.2"/><path d="M3 7 H8 M3 10 H8" stroke="#000"/><path d="M13 3 V13 M11 10 L13 13.5 L15 10" stroke="#000" stroke-width="1.5" fill="none"/></svg>
<div class="t" style="left:858.4px;top:220.14px;color:#000;font-weight:400;">取数据文本</div>
<div style="left:826.4px;top:241.63px;width:11px;height:1px;background:repeating-linear-gradient(90deg,#606060 0 1.7px,transparent 1.7px 3.4px)"></div>
<svg class="a" style="left:838.4px;top:233.63px" width="16" height="16" viewBox="0 0 16 16"><rect x="1.5" y="3.5" width="8" height="10" fill="#fff" stroke="#000" stroke-width="1.2"/><path d="M3 7 H8 M3 10 H8" stroke="#000"/><path d="M13 3 V13 M11 10 L13 13.5 L15 10" stroke="#000" stroke-width="1.5" fill="none"/></svg>
<div class="t" style="left:858.4px;top:236.33px;color:#000;font-weight:400;">置属性</div>
<div style="left:826.4px;top:257.82px;width:11px;height:1px;background:repeating-linear-gradient(90deg,#606060 0 1.7px,transparent 1.7px 3.4px)"></div>
<svg class="a" style="left:838.4px;top:249.82px" width="16" height="16" viewBox="0 0 16 16"><rect x="1.5" y="3.5" width="8" height="10" fill="#fff" stroke="#000" stroke-width="1.2"/><path d="M3 7 H8 M3 10 H8" stroke="#000"/><path d="M13 3 V13 M11 10 L13 13.5 L15 10" stroke="#000" stroke-width="1.5" fill="none"/></svg>
<div class="t" style="left:858.4px;top:252.52px;color:#000;font-weight:400;">置属性对象</div>
<div style="left:826.4px;top:274.01px;width:11px;height:1px;background:repeating-linear-gradient(90deg,#606060 0 1.7px,transparent 1.7px 3.4px)"></div>
<svg class="a" style="left:838.4px;top:266.01px" width="16" height="16" viewBox="0 0 16 16"><rect x="1.5" y="3.5" width="8" height="10" fill="#fff" stroke="#000" stroke-width="1.2"/><path d="M3 7 H8 M3 10 H8" stroke="#000"/><path d="M13 3 V13 M11 10 L13 13.5 L15 10" stroke="#000" stroke-width="1.5" fill="none"/></svg>
<div class="t" style="left:858.4px;top:268.71px;color:#000;font-weight:400;">置属性数值</div>
<div style="left:826.4px;top:290.2px;width:11px;height:1px;background:repeating-linear-gradient(90deg,#606060 0 1.7px,transparent 1.7px 3.4px)"></div>
<svg class="a" style="left:838.4px;top:282.2px" width="16" height="16" viewBox="0 0 16 16"><rect x="1.5" y="3.5" width="8" height="10" fill="#fff" stroke="#000" stroke-width="1.2"/><path d="M3 7 H8 M3 10 H8" stroke="#000"/><path d="M13 3 V13 M11 10 L13 13.5 L15 10" stroke="#000" stroke-width="1.5" fill="none"/></svg>
<div class="t" style="left:858.4px;top:284.9px;color:#000;font-weight:400;">取属性数值</div>
<div style="left:826.4px;top:306.39px;width:11px;height:1px;background:repeating-linear-gradient(90deg,#606060 0 1.7px,transparent 1.7px 3.4px)"></div>
<svg class="a" style="left:838.4px;top:298.39px" width="16" height="16" viewBox="0 0 16 16"><rect x="1.5" y="3.5" width="8" height="10" fill="#fff" stroke="#000" stroke-width="1.2"/><path d="M3 7 H8 M3 10 H8" stroke="#000"/><path d="M13 3 V13 M11 10 L13 13.5 L15 10" stroke="#000" stroke-width="1.5" fill="none"/></svg>
<div class="t" style="left:858.4px;top:301.09px;color:#000;font-weight:400;">取属性对象</div>
<div style="left:826.4px;top:322.58px;width:11px;height:1px;background:repeating-linear-gradient(90deg,#606060 0 1.7px,transparent 1.7px 3.4px)"></div>
<svg class="a" style="left:838.4px;top:314.58px" width="16" height="16" viewBox="0 0 16 16"><rect x="1.5" y="3.5" width="8" height="10" fill="#fff" stroke="#000" stroke-width="1.2"/><path d="M3 7 H8 M3 10 H8" stroke="#000"/><path d="M13 3 V13 M11 10 L13 13.5 L15 10" stroke="#000" stroke-width="1.5" fill="none"/></svg>
<div class="t" style="left:858.4px;top:317.28px;color:#000;font-weight:400;">取通用属性</div>
<div style="left:826.4px;top:338.77px;width:11px;height:1px;background:repeating-linear-gradient(90deg,#606060 0 1.7px,transparent 1.7px 3.4px)"></div>
<svg class="a" style="left:838.4px;top:330.77px" width="16" height="16" viewBox="0 0 16 16"><rect x="1.5" y="3.5" width="8" height="10" fill="#fff" stroke="#000" stroke-width="1.2"/><path d="M3 7 H8 M3 10 H8" stroke="#000"/><path d="M13 3 V13 M11 10 L13 13.5 L15 10" stroke="#000" stroke-width="1.5" fill="none"/></svg>
<div class="t" style="left:858.4px;top:333.47px;color:#000;font-weight:400;">取属性</div>
<div style="left:826.4px;top:354.96px;width:11px;height:1px;background:repeating-linear-gradient(90deg,#606060 0 1.7px,transparent 1.7px 3.4px)"></div>
<svg class="a" style="left:838.4px;top:346.96px" width="16" height="16" viewBox="0 0 16 16"><rect x="1.5" y="3.5" width="8" height="10" fill="#fff" stroke="#000" stroke-width="1.2"/><path d="M3 7 H8 M3 10 H8" stroke="#000"/><path d="M13 3 V13 M11 10 L13 13.5 L15 10" stroke="#000" stroke-width="1.5" fill="none"/></svg>
<div class="t" style="left:858.4px;top:349.66px;color:#000;font-weight:400;">成员数</div>
<div style="left:826.4px;top:371.15px;width:11px;height:1px;background:repeating-linear-gradient(90deg,#606060 0 1.7px,transparent 1.7px 3.4px)"></div>
<svg class="a" style="left:838.4px;top:363.15px" width="16" height="16" viewBox="0 0 16 16"><rect x="1.5" y="3.5" width="8" height="10" fill="#fff" stroke="#000" stroke-width="1.2"/><path d="M3 7 H8 M3 10 H8" stroke="#000"/><path d="M13 3 V13 M11 10 L13 13.5 L15 10" stroke="#000" stroke-width="1.5" fill="none"/></svg>
<div class="t" style="left:858.4px;top:365.85px;color:#000;font-weight:400;">加成员</div>
<div style="left:826.4px;top:387.34px;width:11px;height:1px;background:repeating-linear-gradient(90deg,#606060 0 1.7px,transparent 1.7px 3.4px)"></div>
<svg class="a" style="left:838.4px;top:379.34px" width="16" height="16" viewBox="0 0 16 16"><rect x="1.5" y="3.5" width="8" height="10" fill="#fff" stroke="#000" stroke-width="1.2"/><path d="M3 7 H8 M3 10 H8" stroke="#000"/><path d="M13 3 V13 M11 10 L13 13.5 L15 10" stroke="#000" stroke-width="1.5" fill="none"/></svg>
<div class="t" style="left:858.4px;top:382.04px;color:#000;font-weight:400;">取成员</div>
<div style="left:826.4px;top:403.53px;width:11px;height:1px;background:repeating-linear-gradient(90deg,#606060 0 1.7px,transparent 1.7px 3.4px)"></div>
<svg class="a" style="left:838.4px;top:395.53px" width="16" height="16" viewBox="0 0 16 16"><rect x="1.5" y="3.5" width="8" height="10" fill="#fff" stroke="#000" stroke-width="1.2"/><path d="M3 7 H8 M3 10 H8" stroke="#000"/><path d="M13 3 V13 M11 10 L13 13.5 L15 10" stroke="#000" stroke-width="1.5" fill="none"/></svg>
<div class="t" style="left:858.4px;top:398.23px;color:#000;font-weight:400;">取成员文本</div>
<div style="left:826.4px;top:419.72px;width:11px;height:1px;background:repeating-linear-gradient(90deg,#606060 0 1.7px,transparent 1.7px 3.4px)"></div>
<svg class="a" style="left:838.4px;top:411.72px" width="16" height="16" viewBox="0 0 16 16"><rect x="1.5" y="3.5" width="8" height="10" fill="#fff" stroke="#000" stroke-width="1.2"/><path d="M3 7 H8 M3 10 H8" stroke="#000"/><path d="M13 3 V13 M11 10 L13 13.5 L15 10" stroke="#000" stroke-width="1.5" fill="none"/></svg>
<div class="t" style="left:858.4px;top:414.42px;color:#000;font-weight:400;">置成员</div>
<div style="left:826.4px;top:435.91px;width:11px;height:1px;background:repeating-linear-gradient(90deg,#606060 0 1.7px,transparent 1.7px 3.4px)"></div>
<svg class="a" style="left:838.4px;top:427.91px" width="16" height="16" viewBox="0 0 16 16"><rect x="1.5" y="3.5" width="8" height="10" fill="#fff" stroke="#000" stroke-width="1.2"/><path d="M3 7 H8 M3 10 H8" stroke="#000"/><path d="M13 3 V13 M11 10 L13 13.5 L15 10" stroke="#000" stroke-width="1.5" fill="none"/></svg>
<div class="t" style="left:858.4px;top:430.61px;color:#000;font-weight:400;">删成员</div>
<div style="left:826.4px;top:452.1px;width:11px;height:1px;background:repeating-linear-gradient(90deg,#606060 0 1.7px,transparent 1.7px 3.4px)"></div>
<svg class="a" style="left:838.4px;top:444.1px" width="16" height="16" viewBox="0 0 16 16"><rect x="1.5" y="3.5" width="8" height="10" fill="#fff" stroke="#000" stroke-width="1.2"/><path d="M3 7 H8 M3 10 H8" stroke="#000"/><path d="M13 3 V13 M11 10 L13 13.5 L15 10" stroke="#000" stroke-width="1.5" fill="none"/></svg>
<div class="t" style="left:858.4px;top:446.8px;color:#000;font-weight:400;">删属性</div>
<div style="left:826.4px;top:468.29px;width:11px;height:1px;background:repeating-linear-gradient(90deg,#606060 0 1.7px,transparent 1.7px 3.4px)"></div>
<svg class="a" style="left:838.4px;top:460.29px" width="16" height="16" viewBox="0 0 16 16"><rect x="1.5" y="3.5" width="8" height="10" fill="#fff" stroke="#000" stroke-width="1.2"/><path d="M3 7 H8 M3 10 H8" stroke="#000"/><path d="M13 3 V13 M11 10 L13 13.5 L15 10" stroke="#000" stroke-width="1.5" fill="none"/></svg>
<div class="t" style="left:858.4px;top:462.99px;color:#000;font-weight:400;">置类型</div>
<div style="left:826.4px;top:484.48px;width:11px;height:1px;background:repeating-linear-gradient(90deg,#606060 0 1.7px,transparent 1.7px 3.4px)"></div>
<svg class="a" style="left:838.4px;top:476.48px" width="16" height="16" viewBox="0 0 16 16"><rect x="1.5" y="3.5" width="8" height="10" fill="#fff" stroke="#000" stroke-width="1.2"/><path d="M3 7 H8 M3 10 H8" stroke="#000"/><path d="M13 3 V13 M11 10 L13 13.5 L15 10" stroke="#000" stroke-width="1.5" fill="none"/></svg>
<div class="t" style="left:858.4px;top:479.18px;color:#000;font-weight:400;">赋值</div>
<div style="left:826.4px;top:500.67px;width:11px;height:1px;background:repeating-linear-gradient(90deg,#606060 0 1.7px,transparent 1.7px 3.4px)"></div>
<svg class="a" style="left:838.4px;top:492.67px" width="16" height="16" viewBox="0 0 16 16"><rect x="1.5" y="3.5" width="8" height="10" fill="#fff" stroke="#000" stroke-width="1.2"/><path d="M3 7 H8 M3 10 H8" stroke="#000"/><path d="M13 3 V13 M11 10 L13 13.5 L15 10" stroke="#000" stroke-width="1.5" fill="none"/></svg>
<div class="t" style="left:858.4px;top:495.37px;color:#000;font-weight:400;">属性是否存在</div>
<svg class="a" style="left:825px;top:185.5px" width="13" height="22" viewBox="0 0 13 22"><path d="M1 1 V17 L4.5 13.5 L7.5 20 L9.5 19 L6.8 12.8 H11.5 Z" fill="#fff" stroke="#000" stroke-width="1.4"/></svg>
<div style="left:229px;top:95.3px;width:795px;height:1.5px;background:#505050"></div>
<div style="left:229px;top:530px;width:796px;height:1px;background:#fff"></div>
<div style="left:229px;top:533.2px;width:796px;height:1.5px;background:#707070"></div>
<svg class="a" style="left:0;top:531.5px" width="1024" height="24" viewBox="0 0 1024 24"><path d="M542.5 0 L549.7 20.5 L606.6 20.5 L613.8 0 Z" fill="#fff"/><path d="M230.7 0 L237.9 20.5 L349.5 20.5 L353.1 10.25" fill="none" stroke="#000" stroke-width="1"/><path d="M349.5 0 L356.7 20.5 L409.1 20.5 L412.7 10.25" fill="none" stroke="#000" stroke-width="1"/><path d="M409.1 0 L416.3 20.5 L542.5 20.5 L546.1 10.25" fill="none" stroke="#000" stroke-width="1"/><path d="M542.5 0 L549.7 20.5 L606.6 20.5 L613.8 0" fill="none" stroke="#000" stroke-width="1.2"/><path d="M610.2 10.25 L613.8 20.5 L650.2 20.5 L653.8 10.25" fill="none" stroke="#000" stroke-width="1"/><path d="M650.2 0 L657.4 20.5 L743.8 20.5 L747.4 10.25" fill="none" stroke="#000" stroke-width="1"/><path d="M743.8 0 L751 20.5 L858.9 20.5 L866.1 0" fill="none" stroke="#000" stroke-width="1"/></svg>
<div class="t" style="left:244.6px;top:535.5px;color:#000">窗口程序集<span class="l">_</span>窗口<span class="l">1</span></div>
<div class="t" style="left:361.8px;top:535.5px;color:#000">程序集<span class="l">1</span></div>
<div class="t" style="left:425.9px;top:535.5px;color:#808000"><span class="l">[</span>自定义数据类型表<span class="l">]</span></div>
<div class="t" style="left:551.3px;top:535.5px;color:#000;font-weight:700;letter-spacing:1px">类<span class="l">_json</span></div>
<div class="t" style="left:614.6px;top:535.5px;color:#0000c0;font-weight:500">窗口<span class="l">1</span></div>
<div class="t" style="left:662.8px;top:535.5px;color:#808000"><span class="l">[</span>常量数据表<span class="l">]</span></div>
<div class="t" style="left:760.3px;top:535.5px;color:#808000"><span class="l">[Dll</span>命令定义表<span class="l">]</span></div>
<div style="left:0px;top:554.3px;width:1025px;height:1.2px;background:#fff"></div>
<div style="left:0px;top:557px;width:1025px;height:1.3px;background:#808080"></div>
<div style="left:0px;top:558.3px;width:1025px;height:1px;background:#f4f4f0"></div>
<div class="btn" style="left:4.5px;top:565px;width:7px;height:7px"><svg class="a" style="left:1px;top:1px" width="5" height="5" viewBox="0 0 5 5"><path d="M0.5 0.5 L4.5 4.5 M4.5 0.5 L0.5 4.5" stroke="#000" stroke-width="1.3"/></svg></div>
<div class="btn" style="left:4.5px;top:577px;width:7px;height:7px"><i style="left:2px;top:2px;width:3px;height:3px;background:#000"></i></div>
<div style="left:7px;top:590px;width:1px;height:170px;background:#fff"></div>
<div style="left:8px;top:590px;width:1px;height:170px;background:#808080"></div>
<div style="left:10px;top:590px;width:1px;height:170px;background:#fff"></div>
<div style="left:11px;top:590px;width:1px;height:170px;background:#808080"></div>
<div style="left:23px;top:587px;width:997.3px;height:172.8px;border:1px solid;border-color:#808080 #fff #fff #808080;box-sizing:border-box"></div>
<div style="left:24px;top:588px;width:995.3px;height:170.8px;border:1px solid;border-color:#404040 #d4d0c8 #d4d0c8 #404040;box-sizing:border-box;background:#303030"></div>
<div style="left:1001.2px;top:589px;width:17.1px;height:168.8px;background:repeating-conic-gradient(#fff 0 25%,#d4d0c8 0 50%) 0 0/2px 2px"></div>
<div class="btn" style="left:1001.2px;top:589px;width:15.1px;height:15px">
<svg class="a" style="left:0;top:0" width="15.1" height="15"><path d="M4.05 9.5 L11.05 9.5 L7.55 5.5 Z" fill="#808080"/></svg>
</div>
<div class="btn" style="left:1001.2px;top:740.8px;width:15.1px;height:15px">
<svg class="a" style="left:0;top:0" width="15.1" height="15"><path d="M4.05 5.5 L11.05 5.5 L7.55 9.5 Z" fill="#808080"/></svg>
</div>
<div class="t big" style="left:25.6px;top:592.6px;color:#ececec;font-weight:350"><span class="c">◆</span><span class="l">.</span>易语言助手提醒您：切换链接器成功！</div>
<div class="t big" style="left:25.6px;top:608.7px;color:#ececec;font-weight:350">选中文本长度为：<span class="l">4</span></div>
<div class="t big" style="left:25.6px;top:624.8px;color:#ececec;font-weight:350">当前数据类型长度为：<span class="l">32</span></div>
<div class="t big" style="left:25.6px;top:640.9px;color:#ececec;font-weight:350"><span class="c">◆</span><span class="l">.</span>易语言助手提醒您：停用插件<span class="l"> [ </span>组件箱扩展<span class="l"> ]</span></div>
<div style="left:1021.3px;top:585px;width:1.5px;height:177px;background:#606060"></div>
<div style="left:18px;top:585.5px;width:1000px;height:1px;background:#fff"></div>
<div style="left:77.8px;top:561px;width:58.2px;height:24px;border:1px solid;border-color:#fff #404040 #d4d0c8 #fff;border-right-width:2px;box-sizing:border-box;background:#d4d0c8"></div>
<div style="left:141.1px;top:565px;width:1px;height:18px;background:#808080"></div>
<div style="left:142.1px;top:565px;width:1px;height:18px;background:#fff"></div>
<div style="left:206.1px;top:565px;width:1px;height:18px;background:#808080"></div>
<div style="left:207.1px;top:565px;width:1px;height:18px;background:#fff"></div>
<div style="left:277.9px;top:565px;width:1px;height:18px;background:#808080"></div>
<div style="left:278.9px;top:565px;width:1px;height:18px;background:#fff"></div>
<div style="left:348.1px;top:565px;width:1px;height:18px;background:#808080"></div>
<div style="left:349.1px;top:565px;width:1px;height:18px;background:#fff"></div>
<div style="left:413.1px;top:565px;width:1px;height:18px;background:#808080"></div>
<div style="left:414.1px;top:565px;width:1px;height:18px;background:#fff"></div>
<div style="left:479.1px;top:565px;width:1px;height:18px;background:#808080"></div>
<div style="left:480.1px;top:565px;width:1px;height:18px;background:#fff"></div>
<div style="left:560.7px;top:565px;width:1px;height:18px;background:#808080"></div>
<div style="left:561.7px;top:565px;width:1px;height:18px;background:#fff"></div>
<svg class="a" style="left:26.7px;top:566px" width="16" height="16" viewBox="0 0 16 16"><path d="M4 5 Q4 1.5 8 1.5 Q12 1.5 12 5 Q12 7 9.5 8.5 Q8.5 9 8.5 10.5 H6.5 Q6.5 8.5 8 7.2 Q9.5 6.2 9.5 5 Q9.5 3.7 8 3.7 Q6.5 3.7 6.3 5.3 Z" fill="#f0d000" stroke="#6a5a00" stroke-width=".8"/><rect x="6.3" y="12" width="2.4" height="2.6" fill="#f0d000" stroke="#6a5a00" stroke-width=".8"/></svg>
<div class="t" style="left:47.9px;top:568px;">提示</div>
<svg class="a" style="left:85.7px;top:564.3px" width="16" height="16" viewBox="0 0 16 16"><rect x="1.5" y="1.5" width="12" height="12" fill="#fff" stroke="#000"/><rect x="1" y="1" width="13" height="3" fill="#0a246a"/><path d="M4 7 H10 M4 10 H8" stroke="#555"/><path d="M9 10 L13 14" stroke="#000" stroke-width="1.5"/></svg>
<div class="t" style="left:106.4px;top:566.5px;">输出</div>
<svg class="a" style="left:143.8px;top:566px" width="16" height="16" viewBox="0 0 16 16"><path d="M4 2 V14 M8 2 V14 M12 2 V14" stroke="#000" stroke-width="1.4" stroke-dasharray="3 1.5"/><path d="M2 5 H14" stroke="#2030c0"/></svg>
<div class="t" style="left:164.7px;top:568px;">调用表</div>
<svg class="a" style="left:214px;top:566px" width="16" height="16" viewBox="0 0 16 16"><circle cx="6.5" cy="6.5" r="5" fill="#fff" stroke="#555" stroke-width="1.2"/><path d="M10 10 L15 15" stroke="#000" stroke-width="2"/></svg>
<div class="t" style="left:236px;top:568px;">监视表</div>
<svg class="a" style="left:285.8px;top:566px" width="16" height="16" viewBox="0 0 16 16"><path d="M0.5 8 L4 4 L7.5 8 L4 12 Z" fill="#f0e000" stroke="#000"/><circle cx="11" cy="8" r="3.2" fill="#fff" stroke="#000"/><circle cx="11" cy="8" r="1.2" fill="#000"/></svg>
<div class="t" style="left:305.3px;top:568px;">变量表</div>
<svg class="a" style="left:355.4px;top:566px" width="16" height="16" viewBox="0 0 16 16"><rect x="1.5" y="1.5" width="11" height="11" fill="#fff" stroke="#000"/><path d="M3 10 L6 5 L8 8 L10 6 L12 10Z" fill="#888"/><path d="M9 9 L15 15" stroke="#000" stroke-width="2"/></svg>
<div class="t" style="left:377.2px;top:568px;">搜寻<span class="l">1</span></div>
<svg class="a" style="left:419.2px;top:566px" width="16" height="16" viewBox="0 0 16 16"><rect x="1.5" y="1.5" width="11" height="11" fill="#fff" stroke="#000"/><path d="M3 10 L6 5 L8 8 L10 6 L12 10Z" fill="#888"/><path d="M9 9 L15 15" stroke="#000" stroke-width="2"/></svg>
<div class="t" style="left:441.3px;top:568px;">搜寻<span class="l">2</span></div>
<svg class="a" style="left:485.9px;top:566px" width="16" height="16" viewBox="0 0 16 16"><rect x="2.5" y="1.5" width="11" height="13" fill="#fff" stroke="#000" stroke-width="1.2"/><rect x="6" y="7" width="4" height="4" fill="#444"/></svg>
<div class="t" style="left:506.8px;top:568px;">剪辑历史</div>
</div></body></html>
